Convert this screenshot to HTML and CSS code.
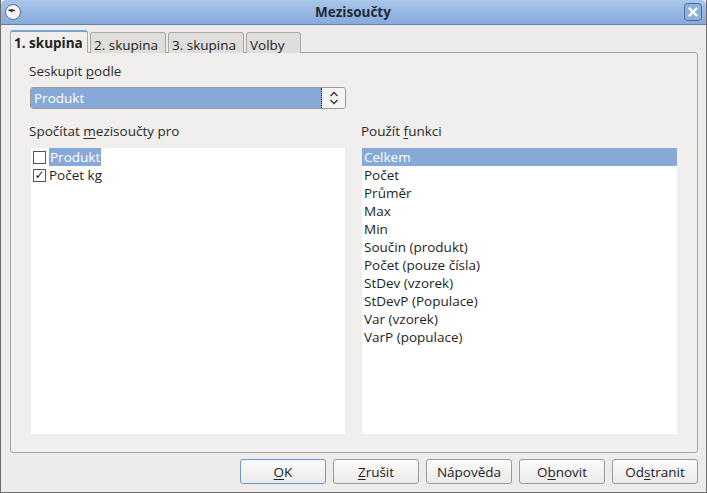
FILE: index.html
```html
<!DOCTYPE html>
<html lang="cs">
<head>
  <meta charset="UTF-8" />
  <title>Mezisoučty</title>
  <link rel="stylesheet" href="styles.css">
</head>
<body>
  <div class="window">
    <div class="titlebar">
      <span class="app-icon">
        <svg width="18" height="18" viewBox="0 0 18 18">
          <circle cx="9" cy="9" r="7.5" fill="#f4f6f8" stroke="#5a6a7a" stroke-width="1"/>
          <path d="M4.5 7.5 Q8 6.2 11 7.8" stroke="#222" stroke-width="1.4" fill="none"/>
          <circle cx="7.5" cy="8" r="1.2" fill="#222"/>
        </svg>
      </span>
      <span class="title">Mezisoučty</span>
      <span class="close">
        <svg width="18" height="18" viewBox="0 0 18 18">
          <rect x="0.5" y="0.5" width="17" height="17" rx="3" fill="#8fb0dc" stroke="#4a6d9c"/>
          <path d="M5.5 5.5 L12.5 12.5 M12.5 5.5 L5.5 12.5" stroke="#fff" stroke-width="2.4" stroke-linecap="round"/>
        </svg>
      </span>
    </div>

    <div class="content">
      <div class="tabs">
        <div class="tab active t1">1. skupina</div>
        <div class="tab t2">2. skupina</div>
        <div class="tab t3">3. skupina</div>
        <div class="tab t4">Volby</div>
      </div>

      <div class="panel">
        <div class="label">Seskupit <u>p</u>odle</div>
        <div class="combo">
          <span class="combo-value">Produkt</span>
          <span class="spin">
            <svg width="10" height="16" viewBox="0 0 10 16">
              <path d="M1.5 6 L5 2.5 L8.5 6 M1.5 10 L5 13.5 L8.5 10" stroke="#333" stroke-width="1.3" fill="none"/>
            </svg>
          </span>
        </div>

        <div class="columns">
          <div class="column">
            <div class="label">Spočítat <u>m</u>ezisoučty pro</div>
            <div class="list">
              <div class="check-row"><span class="box"></span><span class="sel-text">Produkt</span></div>
              <div class="check-row"><span class="box checked">&#10003;</span><span>Počet kg</span></div>
            </div>
          </div>
          <div class="column">
            <div class="label">Použít <u>f</u>unkci</div>
            <div class="list right">
              <div class="row selected">Celkem</div>
              <div class="row">Počet</div>
              <div class="row">Průměr</div>
              <div class="row">Max</div>
              <div class="row">Min</div>
              <div class="row">Součin (produkt)</div>
              <div class="row">Počet (pouze čísla)</div>
              <div class="row">StDev (vzorek)</div>
              <div class="row">StDevP (Populace)</div>
              <div class="row">Var (vzorek)</div>
              <div class="row">VarP (populace)</div>
            </div>
          </div>
        </div>
      </div>

      <div class="buttons">
        <button class="btn default"><u>O</u>K</button>
        <button class="btn"><u>Z</u>rušit</button>
        <button class="btn">Nápověda</button>
        <button class="btn">O<u>b</u>novit</button>
        <button class="btn">Od<u>s</u>tranit</button>
      </div>
    </div>
  </div>
</body>
</html>
```

FILE: styles.css
```css
html, body {
  margin: 0;
  padding: 0;
}
body {
  font-family: "Open Sans", "DejaVu Sans", sans-serif;
  font-size: 13.5px;
  color: #1e1e1e;
  background: #edecea;
}
u {
  text-decoration-thickness: 1px;
  text-underline-offset: 2px;
}
.window {
  width: 707px;
  height: 493px;
  box-sizing: border-box;
  border: 1px solid #6e6e6e;
  border-top: none;
  background: #edecea;
  display: flex;
  flex-direction: column;
}
.titlebar {
  height: 24px;
  background: linear-gradient(#a9c6eb, #86aadb);
  border-bottom: 1px solid #5f82b3;
  border-radius: 5px 5px 0 0;
  display: flex;
  align-items: center;
  padding: 0 4px 0 3px;
  flex-shrink: 0;
}
.app-icon, .close {
  width: 18px;
  height: 18px;
  display: flex;
}
.title {
  flex: 1;
  text-align: center;
  font-weight: bold;
  color: #222c36;
  font-size: 13.5px;
}
.content {
  flex: 1;
  padding: 5px 8px 0 9px;
  display: flex;
  flex-direction: column;
}
.tabs {
  display: flex;
  gap: 2px;
  height: 23px;
  position: relative;
  z-index: 1;
}
.tab {
  box-sizing: border-box;
  border: 1px solid #a9a9a9;
  border-bottom: none;
  border-radius: 3px 3px 0 0;
  background: #e0dedb;
  padding: 3px 0 0 3px;
  height: 21px;
  margin-top: 2px;
  color: #222;
  white-space: nowrap;
}
.tab.t1 { width: 78px; }
.tab.t2 { width: 76px; }
.tab.t3 { width: 76px; }
.tab.t4 { width: 55px; }
.tab.active {
  background: #f0efed;
  font-weight: bold;
  margin-top: 0;
  height: 23px;
  border-top: 2px solid #7a9fd0;
  padding-top: 2px;
}
.panel {
  height: 401px;
  box-sizing: border-box;
  border: 1px solid #a5a5a5;
  border-radius: 0 3px 3px 3px;
  margin-top: -1px;
  background: #f0efed;
  padding: 8px 0 0 18px;
}
.label {
  height: 20px;
  line-height: 20px;
  color: #2a2a2a;
}
.combo {
  margin: 6px 0 0 1px;
  width: 316px;
  height: 22px;
  box-sizing: border-box;
  border: 1px solid #9a9a9a;
  border-radius: 3px;
  background: #fff;
  display: flex;
  overflow: hidden;
}
.combo-value {
  flex: 1;
  background: #87a9d8;
  color: #fff;
  padding-left: 3px;
  line-height: 20px;
  border-right: 1px dotted #222;
}
.spin {
  width: 23px;
  display: flex;
  align-items: center;
  justify-content: center;
  background: #f4f4f3;
}
.columns {
  display: flex;
  gap: 17px;
  margin-top: 12px;
}
.column {
  width: 315px;
}
.list {
  margin: 7px 0 0 2px;
  height: 286px;
  background: #fff;
  width: 314px;
}
.list.right {
  margin-left: 1px;
  width: 315px;
}
.check-row {
  display: flex;
  align-items: center;
  height: 18px;
  padding-left: 2px;
  gap: 3px;
}
.box {
  width: 11px;
  height: 11px;
  border: 1px solid #555;
  background: #fff;
  display: flex;
  align-items: center;
  justify-content: center;
  font-size: 12px;
  line-height: 1;
  color: #222;
}
.sel-text {
  background: #87a9d8;
  color: #fff;
  padding: 0 1px;
}
.row {
  height: 18px;
  line-height: 18px;
  padding-left: 2px;
  color: #1e1e1e;
}
.row.selected {
  background: #87a9d8;
  color: #fff;
}
.buttons {
  display: flex;
  justify-content: flex-end;
  gap: 7px;
  margin-top: 6px;
  padding-right: 0;
}
.btn {
  width: 86px;
  height: 25px;
  font: inherit;
  color: #222;
  background: linear-gradient(#fbfbfa, #ebeae8);
  border: 1px solid #9b9b9b;
  border-radius: 3px;
  padding: 0;
}
.btn.default {
  border-color: #6f97cc;
}
```
